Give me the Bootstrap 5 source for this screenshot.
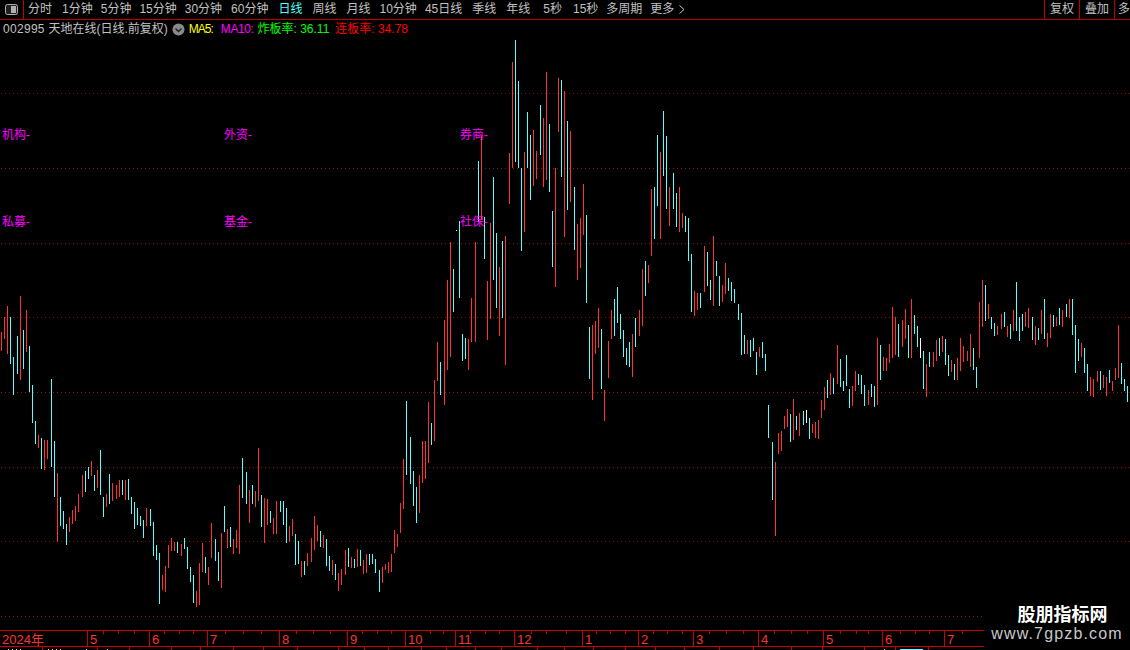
<!DOCTYPE html>
<html lang="zh-CN">
<head>
<meta charset="utf-8">
<title>002995 天地在线</title>
<link href="https://cdn.jsdelivr.net/npm/bootstrap@5.3.0/dist/css/bootstrap.min.css" rel="stylesheet">
<style>
html,body{height:650px;overflow:hidden;background:#000}
body{font:12px/1 "Liberation Sans","Noto Sans CJK SC",sans-serif;color:#c0c0c0;position:relative}
.topbar{height:20px;border-bottom:1px solid #c00000;white-space:nowrap}
.iconcell{width:24px;height:19px;border-right:1px solid #c00000}
.tabs{gap:8px;padding-left:4px}
.tabs span{line-height:19px}
.tabs .on{color:#54ffff}
.tabs .g1{margin-left:1px}
.tabs .g2{margin-left:2px}
.tabs .g3{margin-left:3px}
.tabs .g5{margin-left:5px}
.tabs svg{margin-left:5px;vertical-align:-1px}
.rcell{width:35px;height:19px;line-height:19px;border-left:1px solid #c00000;text-align:center}
.rcell.cut{width:16px;padding-left:3px;text-align:left;overflow:hidden}
.inforow{height:18px;padding-left:3px;white-space:nowrap;line-height:18px;letter-spacing:.3px}
.inforow .zh{letter-spacing:0}
.inforow .ma5{letter-spacing:-1px}
.inforow .ma10{letter-spacing:-.4px}
.inforow .gap6{margin-left:6px}
.c-y{color:#ff0}.c-m{color:#f0f}.c-g{color:#0f0}.c-r{color:#f00}
.chartbox{height:592px;position:relative}
.chartbox svg{display:block}
.tag{position:absolute;color:#f0f;font-size:12px;line-height:14px}
.axis{width:984px;height:17px;border-top:1px solid #c80000;border-bottom:1px solid #c80000;position:relative;color:#ff3232;font-size:13px;line-height:15px}
.axis .mcell{border-left:1px solid #c80000;padding-left:2px;padding-top:1px;flex:none}
.axis .mcell:first-child{border-left:0}
.axis svg,.strip svg{position:absolute;left:0;top:0}
.strip{height:3px;position:relative}
.mark{position:absolute;left:984px;top:600px;width:146px;height:50px;background:#000;text-align:center;padding-top:5px}
.mark b{display:block;color:#fff;font-size:18px;line-height:20px;font-weight:700;margin-left:11px}
.mark i{display:block;font-style:normal;color:#c8c8c8;font-size:16px;line-height:20px;letter-spacing:1.15px;margin-top:-1px}
</style>
</head>
<body>
<div class="topbar d-flex">
  <div class="iconcell d-flex align-items-center justify-content-center">
    <svg width="13" height="11" viewBox="0 0 13 11"><rect x=".5" y=".5" width="12" height="10" rx="2" fill="#202020" stroke="#b0b0b0"/><rect x="6" y="2" width="5" height="7" fill="#b0b0b0"/></svg>
  </div>
  <div class="tabs d-flex flex-grow-1">
    <span>分时</span><span class="g2">1分钟</span><span>5分钟</span><span>15分钟</span><span>30分钟</span><span class="g1">60分钟</span><span class="on g2">日线</span><span class="g2">周线</span><span class="g2">月线</span><span class="g1">10分钟</span><span>45日线</span><span class="g2">季线</span><span class="g2">年线</span><span class="g5">5秒</span><span class="g3">15秒</span><span>多周期</span><span>更多<svg width="6" height="9" viewBox="0 0 6 9"><path d="M.5.5l4.500 4-4.500 4" fill="none" stroke="#c0c0c0"/></svg></span>
  </div>
  <div class="rcell">复权</div><div class="rcell">叠加</div><div class="rcell cut">多</div>
</div>
<div class="inforow d-flex align-items-center">
  <span>002995 <span class="zh">天地在线(日线.前复权)</span></span>
  <svg class="mx-1" width="13" height="13" viewBox="0 0 13 13"><circle cx="6.5" cy="6.5" r="6" fill="#8a8a8a"/><path d="M3.5 5.5l3 3 3-3" fill="none" stroke="#1c1c1c" stroke-width="1.4"/></svg>
  <span class="c-y ma5">MA5:</span>
  <span class="c-m ms-2 ma10">MA10:</span>
  <span class="c-g ms-1 zh">炸板率: 36.11</span>
  <span class="c-r gap6 zh">连板率: 34.78</span>
</div>
<div class="chartbox">
  <svg width="1130" height="592" viewBox="0 38 1130 592" shape-rendering="crispEdges">
    <g stroke="#8a1010" stroke-width="1" stroke-dasharray="1 3" fill="none">
      <path d="M1 93.5H1130M1 168.5H1130M1 243.5H1130M1 317.5H1130M1 392.5H1130M1 467.5H1130M1 541.5H1130M1 616.5H984"/>
    </g>
    <g transform="translate(.5 0)" fill="none" stroke-width="1">
      <path stroke="#ff3232" d="M1 332V351M4 317V339M7 306V354M20 296V380M26 310V352M38 435V448M44 440V470M47 440V459M57 473V542M69 517V532M72 510V524M75 506V521M78 494V512M82 475V497M91 461V476M97 470V488M106 494V507M112 483V501M116 485V499M119 480V497M125 480V500M146 508V526M162 575V590M165 566V592M168 545V568M171 538V551M174 542V551M181 544V556M196 591V607M199 563V605M202 543V572M208 567V585M211 523V558M221 533V588M227 529V548M233 539V554M236 530V548M239 485V554M249 490V523M255 491V507M258 448V501M264 498V543M267 499V525M273 518V534M276 501V534M289 526V542M292 519V536M301 561V577M307 553V566M311 538V562M314 516V550M317 525V541M323 535V548M332 560V575M338 573V591M341 569V585M345 550V575M351 557V568M357 549V567M363 560V574M366 554V573M382 567V583M385 564V570M388 562V573M391 554V572M394 530V553M397 534V547M400 503V533M403 459V509M419 475V513M422 441V483M425 441V479M428 402V463M434 380V441M437 342V381M444 320V405M447 280V370M450 242V357M468 339V370M471 298V342M475 242V342M481 135V220M487 281V340M490 223V319M499 267V336M505 236V365M509 153V204M512 62V168M524 152V232M533 130V186M536 151V179M543 118V187M546 72V180M555 168V287M558 78V132M564 91V237M570 131V202M577 224V280M580 218V268M583 184V235M592 325V400M595 321V354M598 308V348M604 390V421M608 341V378M611 310V339M632 334V377M639 310V336M642 269V326M648 265V283M651 189V256M660 152V239M669 187V226M679 187V232M682 213V228M694 291V316M697 293V310M704 246V292M713 236V306M722 285V302M725 263V294M747 340V354M759 347V357M775 462V536M778 433V454M781 431V451M784 416V429M787 409V427M793 399V440M799 413V436M812 424V433M815 422V438M818 420V439M821 400V418M824 387V410M830 373V395M837 345V384M852 386V406M855 371V391M868 390V405M877 338V405M883 357V371M886 358V371M889 344V363M892 307V358M895 317V355M902 320V347M905 309V339M911 299V358M926 364V397M933 352V367M936 340V361M942 336V352M951 360V372M957 358V380M960 338V371M963 346V362M967 351V361M970 334V367M979 302V358M982 280V327M988 304V319M997 326V335M1001 314V329M1007 326V337M1013 310V331M1025 312V327M1028 308V328M1035 326V345M1041 310V334M1047 333V347M1050 314V338M1056 317V326M1062 310V327M1069 299V318M1081 343V357M1090 377V396M1093 379V397M1097 371V382M1103 375V388M1106 377V396M1112 381V391M1115 368V380M1118 325V378"/>
      <path stroke="#54ffff" d="M10 317V364M13 357V395M17 336V374M23 330V369M29 346V392M32 385V423M35 421V444M41 438V469M51 379V467M54 441V497M60 497V526M63 511V529M66 524V545M85 471V492M88 467V479M94 475V491M100 450V495M103 497V517M109 474V504M122 480V495M128 479V500M131 497V514M134 502V529M137 508V525M140 516V526M143 520V538M150 509V526M153 522V556M156 545V560M159 553V604M177 542V553M184 538V549M187 547V569M190 567V582M193 575V603M205 557V573M215 539V561M218 552V581M224 506V532M230 527V547M242 458V498M246 472V504M252 485V504M261 495V527M270 511V523M280 501V512M283 501V525M286 508V543M295 534V565M298 541V564M304 561V575M320 531V547M326 539V566M329 556V571M335 564V580M348 548V567M354 559V568M360 550V566M369 554V565M372 554V564M375 559V573M379 570V592M406 401V475M410 437V484M413 471V506M416 487V523M431 423V445M440 362V395M453 269V312M459 221V298M462 334V361M465 338V359M478 161V222M484 217V259M493 177V280M496 233V308M502 241V318M515 40V162M518 81V168M521 168V251M527 112V168M530 135V200M540 105V155M549 124V192M552 211V267M561 80V177M567 121V210M574 187V250M586 215V303M589 327V379M601 329V389M614 299V336M617 287V323M620 314V339M623 330V357M626 348V365M629 342V367M635 318V347M645 261V296M654 187V239M657 135V206M663 111V176M666 136V209M673 173V209M676 193V227M685 216V232M688 218V261M691 254V312M700 293V308M707 252V286M710 280V300M716 261V276M719 276V306M728 278V291M731 282V301M734 289V303M738 304V320M741 313V355M744 335V354M750 340V357M753 338V351M756 352V375M762 342V358M765 354V371M768 405V438M772 442V500M790 414V442M796 416V430M803 411V425M809 418V439M827 380V398M833 378V394M840 359V387M843 381V391M846 355V386M849 389V408M858 374V385M861 375V394M864 385V406M871 384V397M874 386V407M880 345V380M898 324V357M908 325V358M914 315V334M917 326V347M923 351V389M929 352V367M939 338V356M945 339V365M948 355V376M954 364V380M973 348V370M976 367V388M985 285V321M991 317V329M994 323V336M1004 312V327M1010 324V339M1016 282V331M1019 317V341M1022 314V331M1032 317V340M1038 328V340M1044 299V339M1053 315V327M1059 308V325M1066 304V317M1072 299V335M1075 325V373M1078 339V361M1084 348V373M1087 364V391M1100 371V390M1109 370V383M1121 363V384M1124 379V391M1127 386V402"/>
      <path stroke="#fff" d="M806 410V423M920 338V358M456 230V231"/>
    </g>
  </svg>
  <span class="tag" style="left:2px;top:90px">机构-</span>
  <span class="tag" style="left:224px;top:90px">外资-</span>
  <span class="tag" style="left:460px;top:90px">券商-</span>
  <span class="tag" style="left:2px;top:177px">私募-</span>
  <span class="tag" style="left:224px;top:177px">基金-</span>
  <span class="tag" style="left:460px;top:177px">社保-</span>
</div>
<div class="axis d-flex">
  <div class="mcell" style="width:87px">2024年</div>
  <div class="mcell" style="width:62px">5</div>
  <div class="mcell" style="width:58px">6</div>
  <div class="mcell" style="width:72px">7</div>
  <div class="mcell" style="width:68px">8</div>
  <div class="mcell" style="width:58px">9</div>
  <div class="mcell" style="width:50px">10</div>
  <div class="mcell" style="width:59px">11</div>
  <div class="mcell" style="width:68px">12</div>
  <div class="mcell" style="width:56px">1</div>
  <div class="mcell" style="width:55px">2</div>
  <div class="mcell" style="width:65px">3</div>
  <div class="mcell" style="width:65px">4</div>
  <div class="mcell" style="width:59px">5</div>
  <div class="mcell" style="width:62px">6</div>
  <div class="mcell" style="width:40px">7</div>
  <svg width="984" height="3" viewBox="0 0 984 3" shape-rendering="crispEdges"><path stroke="#c80000" d="M103.500 0V3M118.500 0V3M134.500 0V3M164.500 0V3M179.500 0V3M193.500 0V3M225.500 0V3M243.500 0V3M261.500 0V3M296.500 0V3M313.500 0V3M330.500 0V3M362.500 0V3M377.500 0V3M391.500 0V3M430.500 0V3M443.500 0V3M470.500 0V3M485.500 0V3M499.500 0V3M531.500 0V3M546.500 0V3M566.500 0V3M596.500 0V3M610.500 0V3M625.500 0V3M653.500 0V3M667.500 0V3M682.500 0V3M709.500 0V3M726.500 0V3M743.500 0V3M774.500 0V3M791.500 0V3M807.500 0V3M840.500 0V3M856.500 0V3M868.500 0V3M900.500 0V3M915.500 0V3M929.500 0V3M962.500 0V3"/></svg>
</div>
<div class="strip">
  <svg width="984" height="3" viewBox="0 0 984 3" shape-rendering="crispEdges">
    <path stroke="#c80000" d="M42.500 0V3M97.500 0V3M129.500 0V3M171.500 0V3M200.500 0V3M233.500 0V3M263.500 0V3M297.500 0V3M338.500 0V3M364.500 0V3M388.500 0V3M421.500 0V3M446.500 0V3M475.500 0V3M501.500 0V3M537.500 0V3M564.500 0V3M593.500 0V3M625.500 0V3M655.500 0V3M684.500 0V3M719.500 0V3M753.500 0V3M791.500 0V3M822.500 0V3M864.500 0V3M895.500 0V3M928.500 0V3"/>
    <path stroke="#d8d8d8" d="M8.500 2V3M12.500 2V3M16.500 2V3M20.500 2V3M107.500 2V3M884.500 2V3"/>
    <path stroke="#e8e858" d="M48.500 2V3M52.500 2V3M56.500 2V3M60.500 2V3M86.500 2V3"/>
    <path stroke="#54ffff" d="M900 2.500H923"/>
  </svg>
</div>
<div class="mark"><b>股朋指标网</b><i>www.7gpzb.com</i></div>
</body>
</html>
